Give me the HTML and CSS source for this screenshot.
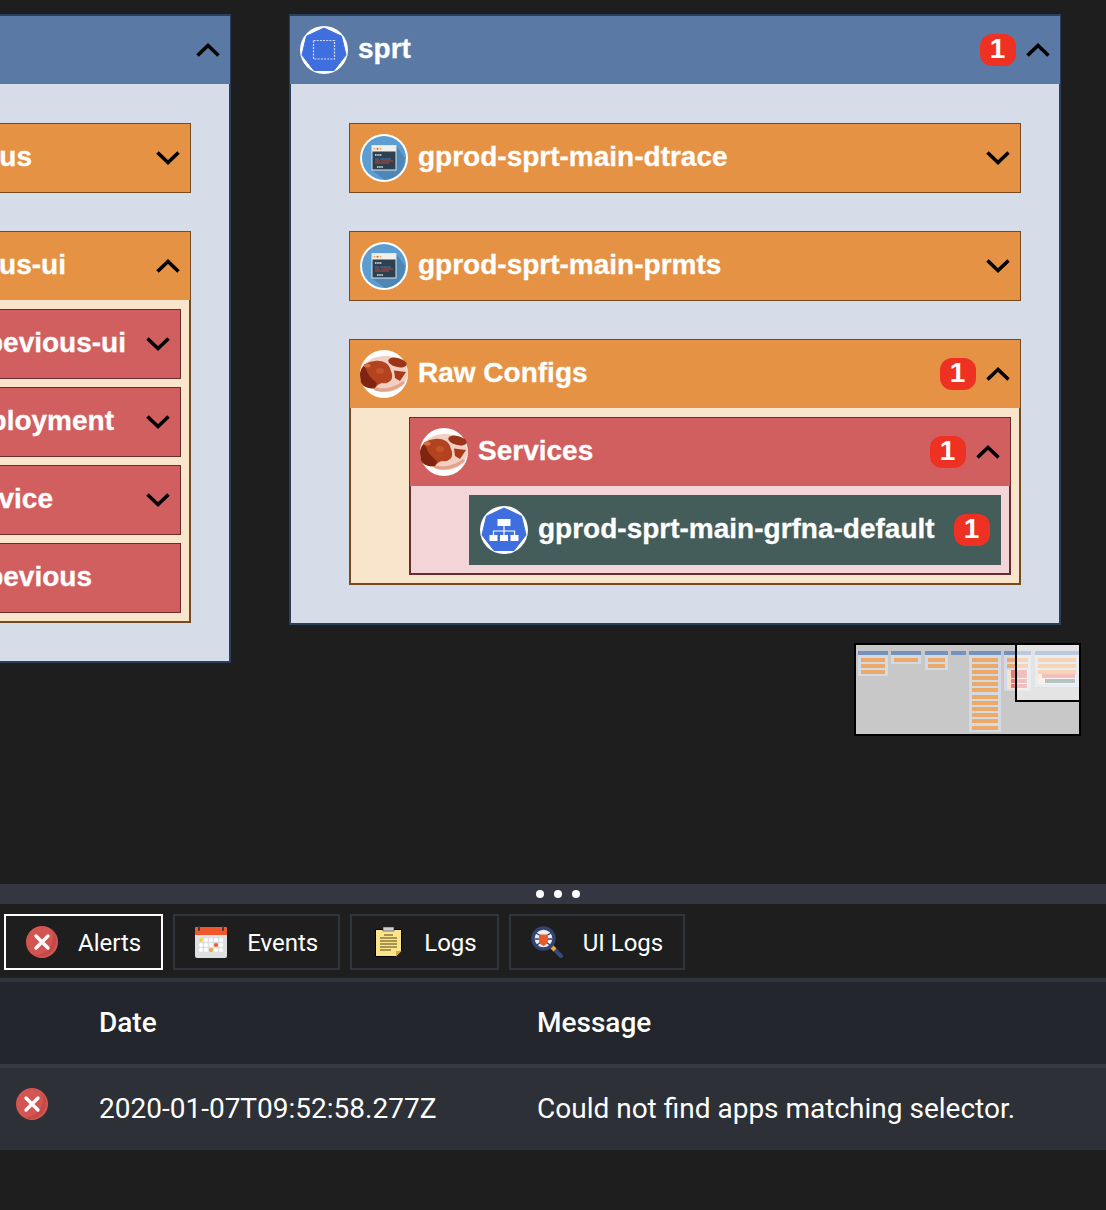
FILE: index.html
```html
<!DOCTYPE html>
<html lang="en">
<head>
    <meta charset="UTF-8">
    <meta name="viewport" content="width=device-width, initial-scale=1.0">
    <title>Kubernetes resources</title>
    <link rel="stylesheet" href="styles.css">
</head>
<body>

    <svg class="sprites" aria-hidden="true">
        <symbol id="i-up" viewBox="0 0 24 14">
            <polyline points="1.5,12.5 12,2.5 22.5,12.5" fill="none" stroke="#000" stroke-width="3.6"/>
        </symbol>
        <symbol id="i-down" viewBox="0 0 24 14">
            <polyline points="1.5,1.5 12,11.5 22.5,1.5" fill="none" stroke="#000" stroke-width="3.6"/>
        </symbol>
        <symbol id="i-ns" viewBox="0 0 48 48">
            <circle cx="24" cy="24" r="24" fill="#fff"/>
            <polygon points="24,2 41.5,10.2 46,29 34,44.5 14,44.5 2,29 6.5,10.2" fill="#3f6fde" stroke="#3f6fde" stroke-linejoin="round"/>
            <rect x="13.5" y="14.5" width="21" height="18.5" fill="none" stroke="#d4def6" stroke-width="1.2" stroke-dasharray="2 1.2"/>
        </symbol>
        <symbol id="i-svc" viewBox="0 0 48 48">
            <circle cx="24" cy="24" r="24" fill="#fff"/>
            <polygon points="24,2 41.5,10.2 46,29 34,44.5 14,44.5 2,29 6.5,10.2" fill="#3f6fde" stroke="#3f6fde" stroke-linejoin="round"/>
            <rect x="17.5" y="13" width="13" height="7" fill="#fff"/>
            <path d="M24 20v9M13.5 29v-4h21v4" fill="none" stroke="#fff" stroke-width="1.2"/>
            <rect x="9.5" y="29" width="8" height="6" fill="#fff"/>
            <rect x="20" y="29" width="8" height="6" fill="#fff"/>
            <rect x="30.5" y="29" width="8" height="6" fill="#fff"/>
        </symbol>
        <symbol id="i-term" viewBox="0 0 48 48">
            <circle cx="24" cy="24" r="24" fill="#fff"/>
            <circle cx="24" cy="24" r="22" fill="#5c9dd2"/>
            <path d="M36.500 12 L45 24 A22 22 0 0 1 25 46 L12 36.500z" fill="#4f86b8"/>
            <rect x="11.500" y="11" width="25" height="25.500" fill="#dfe5ea"/>
            <rect x="12.500" y="12" width="23" height="5.500" fill="#f0eeea"/>
            <circle cx="14.500" cy="14.700" r="1" fill="#e8b04a"/>
            <circle cx="17.500" cy="14.700" r="1" fill="#d9534a"/>
            <circle cx="20.500" cy="14.700" r="1" fill="#e8b04a"/>
            <rect x="12.500" y="17.500" width="23" height="18" fill="#2e3f4e"/>
            <path d="M15 21h7" stroke="#e8edf0" stroke-width="1.500" stroke-dasharray="1.500 .7"/>
            <path d="M15 25h4M20 25h11" stroke="#3b86c4" stroke-width=".9"/>
            <path d="M15 27h5M21 27h12" stroke="#d0483c" stroke-width=".9"/>
            <path d="M15 29h14" stroke="#c24c44" stroke-width=".9"/>
            <path d="M17 33h6" stroke="#e8edf0" stroke-width="1.500" stroke-dasharray="1.500 .7"/>
        </symbol>
        <symbol id="i-meat" viewBox="0 0 48 48">
            <circle cx="24" cy="24" r="24" fill="#fff"/>
            <path d="M0 22 C4 10 16 5 28 6 C38 7 47 14 48 24 C47 34 38 42 26 42 C14 42 3 36 0 22z" fill="#f1cfc2"/>
            <path d="M14 37 C22 40 34 38 43 31 L45 33 C36 41 22 44 14 40z" fill="#e5a28a"/>
            <path d="M0 24 C1 16 6 12 15 11 C22 10 28 13 30 18 C31 22 33 24 32 28 C31 32 26 34 22 33 C18 34 17 36 15 38 C9 39 3 37 1 32z" fill="#b2431e"/>
            <path d="M0 24 C1 19 3 16 5 15 C6 22 10 28 17 33 C16 35 15 38 15 38 C9 39 3 37 1 32z" fill="#7f2410"/>
            <ellipse cx="7" cy="15.500" rx="3.500" ry="2" fill="#d4703f"/>
            <ellipse cx="20" cy="21" rx="4" ry="3" fill="#c2532a"/>
            <ellipse cx="37.500" cy="12.500" rx="9.500" ry="4.500" transform="rotate(14 37.500 12.500)" fill="#9c3417"/>
            <path d="M34 20.500 L46 22 L40 31 L35 28z" fill="#a83a1a"/>
        </symbol>
        <symbol id="i-error" viewBox="0 0 32 32">
            <circle cx="16" cy="16" r="16" fill="#d25552"/>
            <path d="M26 4 A16 16 0 0 1 8 29.500 A19 19 0 0 0 26 4z" fill="#c44a48"/>
            <path d="M10 10 L22 22 M22 10 L10 22" stroke="#fff" stroke-width="3.400" stroke-linecap="round"/>
        </symbol>
        <symbol id="i-cal" viewBox="0 0 32 32">
            <rect y="1" width="32" height="31" rx="2" fill="#dfe0e2"/>
            <path d="M0 9V3a2 2 0 0 1 2-2h28a2 2 0 0 1 2 2v6z" fill="#f0582c"/>
            <rect x="3" y="0" width="2" height="5" rx="1" fill="#3b3b45"/>
            <rect x="27" y="0" width="2" height="5" rx="1" fill="#3b3b45"/>
            <g fill="#fff">
                <circle cx="6" cy="14" r="2"/><circle cx="11" cy="14" r="2"/><circle cx="16" cy="14" r="2"/><circle cx="21" cy="14" r="2"/><circle cx="26" cy="14" r="2"/>
                <circle cx="6" cy="19" r="2"/><circle cx="11" cy="19" r="2"/><circle cx="16" cy="19" r="2"/><circle cx="26" cy="19" r="2"/>
                <circle cx="6" cy="24" r="2"/><circle cx="11" cy="24" r="2"/><circle cx="21" cy="24" r="2"/><circle cx="26" cy="24" r="2"/>
            </g>
            <circle cx="6" cy="14" r="2" fill="#f6cf3f"/>
            <circle cx="21" cy="19" r="2" fill="#ee5a2c"/>
            <circle cx="16" cy="24" r="2" fill="#f5a03a"/>
        </symbol>
        <symbol id="i-note" viewBox="0 0 32 32">
            <path d="M3.500 3.500H29.500V25L24 30.500H3.500z" fill="#fbe48a" stroke="#000" stroke-width="1"/>
            <path d="M24 30.500V25H29.500z" fill="#d9a92c"/>
            <rect x="11" y="1" width="11" height="4" fill="#cfcfcf" stroke="#333" stroke-width=".6"/>
            <path d="M12 9h9M8 12h17M8 15h17M8 18h17M8 21h17M8 24h11" stroke="#8c7a3e" stroke-width="1.400"/>
        </symbol>
        <symbol id="i-bug" viewBox="0 0 32 32">
            <path d="M21 21 L30 30" stroke="#344a80" stroke-width="4" stroke-linecap="round"/>
            <path d="M20 20 L24 24" stroke="#f0a92e" stroke-width="4"/>
            <circle cx="12.500" cy="12.500" r="10.500" fill="#e8eef6" stroke="#33436e" stroke-width="3.400"/>
            <path d="M5 7l5 3M20 7l-5 3M4 13h5M21 13h-5M6 19l4-3M19 19l-4-3" stroke="#33436e" stroke-width="1.300"/>
            <path d="M8 8.500h9v6c0 3-2.500 4.500-4.500 5.500C10.500 19 8 17.500 8 14.500z" fill="#ea5a28"/>
        </symbol>
    </svg>

    <div class="canvas">
        <section class="panel panel-cut">
            <header class="panel-head">
                <span class="label"></span>
                <svg class="chevron"><use href="#i-up"/></svg>
            </header>
            <div class="panel-body">
                <div class="row orange">
                    <span class="label cut end-us">pevious</span>
                    <svg class="chevron"><use href="#i-down"/></svg>
                </div>
                <div class="node orange-node">
                    <div class="node-head">
                        <span class="label cut end-us-ui">pevious-ui</span>
                        <svg class="chevron"><use href="#i-up"/></svg>
                    </div>
                    <div class="node-body stack">
                        <div class="row red">
                            <span class="label cut end-ui">pevious-ui</span>
                            <svg class="chevron"><use href="#i-down"/></svg>
                        </div>
                        <div class="row red">
                            <span class="label cut end-deploy">deployment</span>
                            <svg class="chevron"><use href="#i-down"/></svg>
                        </div>
                        <div class="row red">
                            <span class="label cut end-service">service</span>
                            <svg class="chevron"><use href="#i-down"/></svg>
                        </div>
                        <div class="row red">
                            <span class="label cut end-last">pevious</span>
                        </div>
                    </div>
                </div>
            </div>
        </section>

        <section class="panel panel-main">
            <header class="panel-head">
                <svg class="icon"><use href="#i-ns"/></svg>
                <span class="label">sprt</span>
                <span class="badge">1</span>
                <svg class="chevron"><use href="#i-up"/></svg>
            </header>
            <div class="panel-body">
                <div class="row orange">
                    <svg class="icon"><use href="#i-term"/></svg>
                    <span class="label">gprod-sprt-main-dtrace</span>
                    <svg class="chevron"><use href="#i-down"/></svg>
                </div>
                <div class="row orange">
                    <svg class="icon"><use href="#i-term"/></svg>
                    <span class="label">gprod-sprt-main-prmts</span>
                    <svg class="chevron"><use href="#i-down"/></svg>
                </div>
                <div class="node orange-node">
                    <div class="node-head">
                        <svg class="icon"><use href="#i-meat"/></svg>
                        <span class="label">Raw Configs</span>
                        <span class="badge">1</span>
                        <svg class="chevron"><use href="#i-up"/></svg>
                    </div>
                    <div class="node-body">
                        <div class="node red-node">
                            <div class="node-head">
                                <svg class="icon"><use href="#i-meat"/></svg>
                                <span class="label">Services</span>
                                <span class="badge">1</span>
                                <svg class="chevron"><use href="#i-up"/></svg>
                            </div>
                            <div class="node-body">
                                <div class="row green">
                                    <svg class="icon"><use href="#i-svc"/></svg>
                                    <span class="label">gprod-sprt-main-grfna-default</span>
                                    <span class="badge">1</span>
                                </div>
                            </div>
                        </div>
                    </div>
                </div>
            </div>
        </section>

        <div class="minimap">
            <div class="mini-col w30">
                <div class="mini-head"></div>
                <div class="mini-body">
                    <i></i><i></i><i></i>
                </div>
            </div>
            <div class="mini-col w30">
                <div class="mini-head"></div>
                <div class="mini-body">
                    <i></i>
                </div>
            </div>
            <div class="mini-col w23">
                <div class="mini-head"></div>
                <div class="mini-body">
                    <i></i><i></i>
                </div>
            </div>
            <div class="mini-col w15">
                <div class="mini-head"></div>
            </div>
            <div class="mini-col w32">
                <div class="mini-head"></div>
                <div class="mini-body">
                    <i></i><i></i><i></i><i></i><i></i><i></i><i></i><i></i><i></i><i></i><i></i><i></i>
                </div>
            </div>
            <div class="mini-col w27">
                <div class="mini-head"></div>
                <div class="mini-body">
                    <i></i><i></i>
                    <div class="mini-nest">
                        <b></b><b></b><b></b><b></b>
                    </div>
                </div>
            </div>
            <div class="mini-col w44">
                <div class="mini-head"></div>
                <div class="mini-body">
                    <i></i><i></i><i></i>
                    <div class="mini-nest mini-nest-last">
                        <b></b><u></u>
                    </div>
                </div>
            </div>
            <div class="mini-view"></div>
        </div>
    </div>

    <div class="drawer">
        <div class="drag-bar">
            <span></span><span></span><span></span>
        </div>
        <nav class="tabs">
            <div class="tab active"><svg class="tab-icon"><use href="#i-error"/></svg><span class="tab-text">Alerts</span></div>
            <div class="tab"><svg class="tab-icon"><use href="#i-cal"/></svg><span class="tab-text">Events</span></div>
            <div class="tab"><svg class="tab-icon"><use href="#i-note"/></svg><span class="tab-text">Logs</span></div>
            <div class="tab"><svg class="tab-icon"><use href="#i-bug"/></svg><span class="tab-text">UI Logs</span></div>
        </nav>
        <table class="alerts">
            <thead>
                <tr>
                    <th class="col-icon"></th>
                    <th class="col-date">Date</th>
                    <th>Message</th>
                </tr>
            </thead>
            <tbody>
                <tr>
                    <td class="cell-icon"><svg class="tab-icon"><use href="#i-error"/></svg></td>
                    <td>2020-01-07T09:52:58.277Z</td>
                    <td>Could not find apps matching selector.</td>
                </tr>
            </tbody>
        </table>
    </div>

</body>
</html>
```

FILE: styles.css
```css
* {
    box-sizing: border-box;
}
html, body {
    height: 100%;
}
body {
    margin: 0;
    display: flex;
    flex-direction: column;
    height: 1210px;
    overflow: hidden;
    background-color: #1e1e1e;
    color: #fff;
    font-family: "Liberation Sans", Arial, sans-serif;
}
.sprites {
    display: none;
}

/* Canvas */
.canvas {
    position: relative;
    display: flex;
    align-items: flex-start;
    gap: 58px;
    height: 884px;
    padding-top: 14px;
    overflow: hidden;
}
.panel {
    flex: none;
    border: 2px solid #2a3f5c;
    background: #d6dde9;
}
.panel-cut {
    width: 560px;
    margin-left: -329px;
}
.panel-main {
    width: 772px;
}
.panel-head {
    display: flex;
    align-items: center;
    gap: 10px;
    height: 68px;
    margin: 0 -1px;
    padding: 0 10px;
    background: #5a7aa5;
}
.panel-body {
    display: flex;
    flex-direction: column;
    gap: 38px;
    padding: 39px 38px 38px 58px;
}
.icon {
    flex: none;
    width: 48px;
    height: 48px;
}
.label {
    flex: 1;
    font-size: 28px;
    font-weight: bold;
    line-height: 1;
    padding-bottom: 3px;
    white-space: nowrap;
    -webkit-text-stroke: 0.3px #fff;
}
.chevron {
    flex: none;
    width: 24px;
    height: 14px;
}
.badge {
    flex: none;
    width: 36px;
    height: 32px;
    border-radius: 12px;
    background: #ef3124;
    font-size: 28px;
    font-weight: bold;
    line-height: 30px;
    padding-right: 1px;
    text-align: center;
}

/* Rows and expanded nodes */
.row {
    display: flex;
    align-items: center;
    gap: 10px;
    height: 70px;
    padding: 0 10px;
    border: 1px solid;
}
.orange {
    background: #e69244;
    border-color: #744a20;
}
.red {
    background: #d25f5f;
    border-color: #6b2c2f;
}
.green {
    background: #445c5a;
    border: none;
    padding: 0 11px;
}
.node-head {
    display: flex;
    align-items: center;
    gap: 10px;
    height: 69px;
    padding: 0 10px;
    border: 1px solid;
    border-bottom: none;
}
.node-body {
    padding: 9px 8px 8px 58px;
    border: 2px solid;
    border-top: none;
}
.stack {
    display: flex;
    flex-direction: column;
    gap: 8px;
}
.orange-node > .node-head {
    background: #e69244;
    border-color: #744a20;
}
.orange-node > .node-body {
    background: #f9e5cc;
    border-color: #744a20;
}
.red-node > .node-head {
    background: #d25f5f;
    border-color: #6b2c2f;
}
.red-node > .node-body {
    background: #f3d5d7;
    border-color: #6b2c2f;
}

/* Left panel is cut by the window, labels are kept to the right */
.cut {
    text-align: right;
}
.end-us {
    padding-right: 114px;
}
.end-us-ui {
    padding-right: 80px;
}
.end-ui {
    padding-right: 10px;
}
.end-deploy {
    padding-right: 22px;
}
.end-service {
    padding-right: 83px;
}
.end-last {
    padding-right: 78px;
}

/* Minimap */
.minimap {
    position: absolute;
    left: 854px;
    top: 643px;
    display: flex;
    align-items: flex-start;
    gap: 3.3px;
    width: 227px;
    height: 93px;
    padding: 6px 0 0 2px;
    border: 2px solid #000;
    background: #c8c8c8;
    overflow: hidden;
}
.mini-col {
    flex: none;
}
.w30 { width: 30px; }
.w23 { width: 23px; }
.w15 { width: 15px; }
.w32 { width: 32px; }
.w27 { width: 27px; }
.w44 { width: 44px; }
.mini-head {
    height: 4px;
    background: #7492bd;
}
.mini-body {
    display: flex;
    flex-direction: column;
    gap: 2.2px;
    padding: 2.500px 3px 2.500px;
    background: #d3dae4;
}
.mini-body i {
    display: block;
    height: 4px;
    background: #eca968;
}
.mini-nest {
    display: flex;
    flex-direction: column;
    gap: 0.6px;
    padding: 0 1px 1px 4px;
    background: #f6e3cd;
}
.mini-nest b {
    display: block;
    height: 4px;
    background: #e08080;
}
.mini-nest u {
    display: block;
    height: 4px;
    margin-left: 3px;
    background: #6c8583;
}
.mini-nest-last {
    gap: 1px;
    margin-top: -2px;
}
.mini-view {
    position: absolute;
    right: 0;
    top: 0;
    width: 64px;
    height: 57px;
    border-left: 2px solid #000;
    border-bottom: 2px solid #000;
    background: rgba(255, 255, 255, 0.5);
}

/* Bottom drawer */
.drawer {
    flex: 1;
    font-family: Roboto, sans-serif;
}
.drag-bar {
    display: flex;
    justify-content: center;
    align-items: center;
    gap: 10px;
    height: 20px;
    padding-left: 10px;
    background: #343741;
}
.drag-bar span {
    width: 8px;
    height: 8px;
    border-radius: 50%;
    background: #fff;
}
.tabs {
    display: flex;
    gap: 10px;
    height: 78px;
    padding: 10px 0 8px 4px;
    border-bottom: 4px solid #30343b;
}
.tab {
    display: flex;
    align-items: center;
    gap: 20px;
    height: 56px;
    padding: 0 20px;
    border: 2px solid #30343b;
    font-size: 24px;
}
.tab.active {
    border-color: #fff;
}
.tab-text {
    padding-top: 2px;
}
.tab-icon {
    flex: none;
    display: block;
    width: 32px;
    height: 32px;
}
.alerts {
    width: 100%;
    border-collapse: separate;
    border-spacing: 0;
    table-layout: fixed;
    font-size: 28px;
}
.alerts th {
    height: 82px;
    padding: 0 0 2px;
    background: #23262c;
    font-weight: 500;
    text-align: left;
}
.col-icon {
    width: 99px;
}
.col-date {
    width: 438px;
}
.alerts td {
    height: 86px;
    padding: 0 0 2px;
    border-top: 4px solid #373a41;
    background: #2d3036;
}
.alerts .cell-icon {
    padding: 0 0 0 16px;
    vertical-align: top;
}
.cell-icon .tab-icon {
    margin-top: 20px;
}
```
